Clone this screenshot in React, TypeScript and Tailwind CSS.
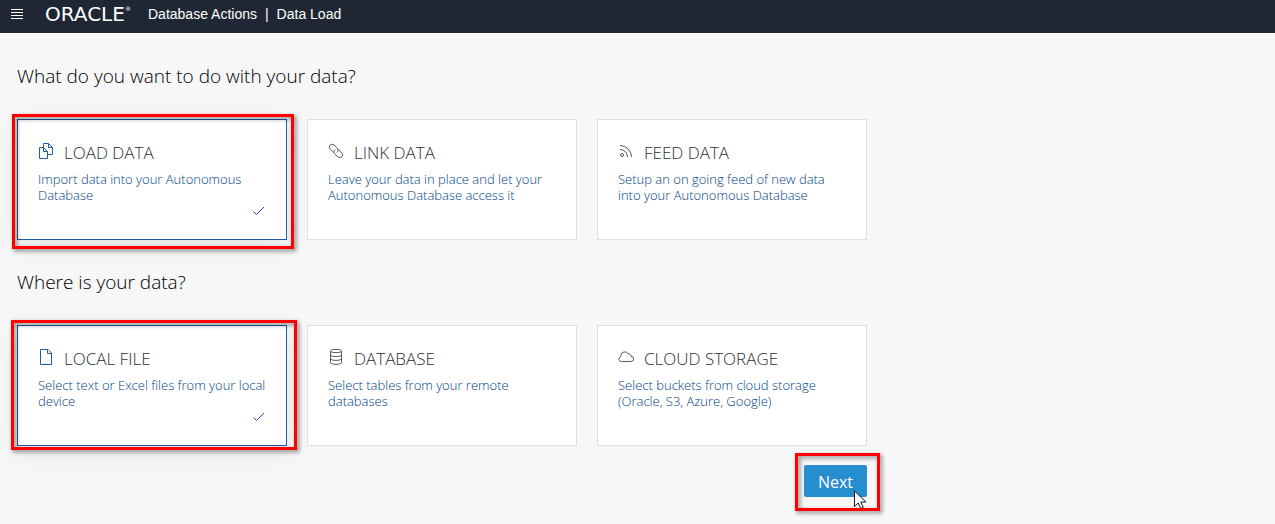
import { useState, type ReactNode } from "react";

type Option = { id: string; title: string; text: string; icon: ReactNode; frame?: string };

const svgProps = {
  width: 16,
  height: 18,
  viewBox: "0 0 16 18",
  fill: "none",
  stroke: "currentColor",
  strokeWidth: 1,
  "aria-hidden": true,
} as const;

const CopyIcon = () => (
  <svg {...svgProps}>
    <path d="M5.500 5.500V1.500H10.500L14.500 5.500V12.500H9.500M10.500 1.500V5.500H14.500" />
    <path d="M1.500 5.500H5.500L9.500 9.500V16.500H1.500ZM5.500 5.500V9.500H9.500" />
  </svg>
);

const LinkIcon = () => (
  <svg {...svgProps} strokeWidth={0.9}>
    <g transform="rotate(42 8 9)">
      <path d="M7.500 11.500H2.500a2.800 2.800 0 0 1 0-5.600H6.800a2.800 2.800 0 0 1 2.600 3.800" />
      <path d="M8.500 6.500H13.500a2.800 2.800 0 0 1 0 5.600H9.200a2.800 2.800 0 0 1-2.600-3.800" />
    </g>
  </svg>
);

const FeedIcon = () => (
  <svg {...svgProps}>
    <circle cx="4" cy="13" r="1.500" />
    <path d="M2 7.500a7.500 7.500 0 0 1 7.500 7.500M2 3.500A11.500 11.500 0 0 1 13.500 15" />
  </svg>
);

const FileIcon = () => (
  <svg {...svgProps}>
    <path d="M2.500 1.500H10L13.500 5V16.500H2.500ZM9.500 1.500V5.500H13.500" />
  </svg>
);

const DatabaseIcon = () => (
  <svg {...svgProps}>
    <ellipse cx="8" cy="3" rx="5.500" ry="1.700" />
    <path d="M2.500 3V14.500c0 2.400 11 2.400 11 0V3M2.500 6.700c0 2.400 11 2.400 11 0M2.500 10.600c0 2.400 11 2.400 11 0" />
  </svg>
);

const CloudIcon = () => (
  <svg {...svgProps}>
    <path d="M3.200 13.500H12.800a2.600 2.600 0 0 0 .3-5.200 2.600 2.600 0 0 0-3-2.600A4 4 0 0 0 2.800 7.200v1.400a2.500 2.500 0 0 0 .4 4.900Z" />
  </svg>
);

const actions: Option[] = [
  { id: "load", title: "LOAD DATA", text: "Import data into your Autonomous Database", icon: <CopyIcon />, frame: "-left-[5px] -top-[5px] -right-[7px] -bottom-[9px]" },
  { id: "link", title: "LINK DATA", text: "Leave your data in place and let your Autonomous Database access it", icon: <LinkIcon /> },
  { id: "feed", title: "FEED DATA", text: "Setup an on going feed of new data into your Autonomous Database", icon: <FeedIcon /> },
];

const sources: Option[] = [
  { id: "local", title: "LOCAL FILE", text: "Select text or Excel files from your local device", icon: <FileIcon />, frame: "-left-[6px] -top-[5px] -right-[10px] -bottom-[4px]" },
  { id: "database", title: "DATABASE", text: "Select tables from your remote databases", icon: <DatabaseIcon /> },
  { id: "cloud", title: "CLOUD STORAGE", text: "Select buckets from cloud storage (Oracle, S3, Azure, Google)", icon: <CloudIcon /> },
];

function Highlight({ place }: { place: string }) {
  return (
    <span
      className={`pointer-events-none absolute border-3 border-[#ff0000] drop-shadow-[2px_2px_2px_rgba(0,0,0,0.5)] ${place}`}
    />
  );
}

function Card({ option, selected, onSelect }: { option: Option; selected: boolean; onSelect: () => void }) {
  return (
    <div className="relative flex">
      <button
        type="button"
        aria-pressed={selected}
        onClick={onSelect}
        className={`flex min-h-[121px] w-full flex-col border bg-white px-5 pt-[21px] text-left ${
          selected ? "border-[#1f5ca3] shadow-[0_6px_24px_rgba(0,0,0,0.08)]" : "border-[#e0e0e0]"
        }`}
      >
        <span className="flex h-6 items-center gap-[10px] text-[17px] font-light text-[#2b3036]">
          <span className={`pb-1 ${selected ? "text-[#1f5ca3]" : "text-[#55585c]"}`}>{option.icon}</span>
          {option.title}
        </span>
        <span className="mt-[6px] text-[13px] leading-4 font-light text-[#003f86]">{option.text}</span>
        {selected && (
          <svg className="mt-[2px] self-end" width="14" height="12" viewBox="0 0 14 12" fill="none" stroke="#4a2cf0" strokeWidth="1" aria-hidden="true">
            <path d="M1.500 6.500L4.500 9.500L12 2" />
          </svg>
        )}
      </button>
      {option.frame && <Highlight place={option.frame} />}
    </div>
  );
}

function Choices({ heading, options, value, onChange }: { heading: string; options: Option[]; value: string; onChange: (id: string) => void }) {
  return (
    <section>
      <h2 className="text-[19px] leading-7 font-light text-black">{heading}</h2>
      <div className="mt-[29px] grid grid-cols-3 gap-5">
        {options.map((o) => (
          <Card key={o.id} option={o} selected={o.id === value} onSelect={() => onChange(o.id)} />
        ))}
      </div>
    </section>
  );
}

export default function App() {
  const [action, setAction] = useState("load");
  const [source, setSource] = useState("local");
  return (
    <div className="min-h-screen bg-[#f7f7f7] font-['Open_Sans',sans-serif]">
      <header className="flex h-[33px] items-center bg-[#1e2733] pb-[6px] pl-[10px] font-['Liberation_Sans',Arial,sans-serif] text-sm text-white">
        <button type="button" aria-label="Menu" className="flex">
          <svg width="14" height="12" viewBox="0 0 14 12" stroke="currentColor" aria-hidden="true">
            <path d="M1 1.500H13M1 4.500H13M1 7.500H13M1 10.500H13" />
          </svg>
        </button>
        <span className="ml-[21px] flex w-[103px] items-start font-['DejaVu_Sans',sans-serif] text-[20px] leading-5">
          ORACLE<span className="text-[6px] leading-[10px]">®</span>
        </span>
        <span>Database Actions</span>
        <span className="mx-2">|</span>
        <span>Data Load</span>
      </header>
      <main className="max-w-[884px] px-[17px] pt-[29px]">
        <div className="flex flex-col gap-7">
          <Choices heading="What do you want to do with your data?" options={actions} value={action} onChange={setAction} />
          <Choices heading="Where is your data?" options={sources} value={source} onChange={setSource} />
        </div>
        <div className="mt-[19px] flex justify-end">
          <div className="relative">
            <button type="button" className="h-8 w-[63px] rounded-xs bg-[#268dce] pt-[2px] text-base text-white">
              Next
            </button>
            <svg className="pointer-events-none absolute top-[25px] left-[50px]" width="13" height="20" viewBox="0 0 13 20" aria-hidden="true">
              <path d="M.5 1V16.500L4.200 13L6.800 18.500L9.300 17.400L6.800 12H12Z" fill="#fff" stroke="#1b1b2b" />
            </svg>
            <Highlight place="-left-[9px] -top-[12px] -right-[13px] -bottom-[14px]" />
          </div>
        </div>
      </main>
    </div>
  );
}
